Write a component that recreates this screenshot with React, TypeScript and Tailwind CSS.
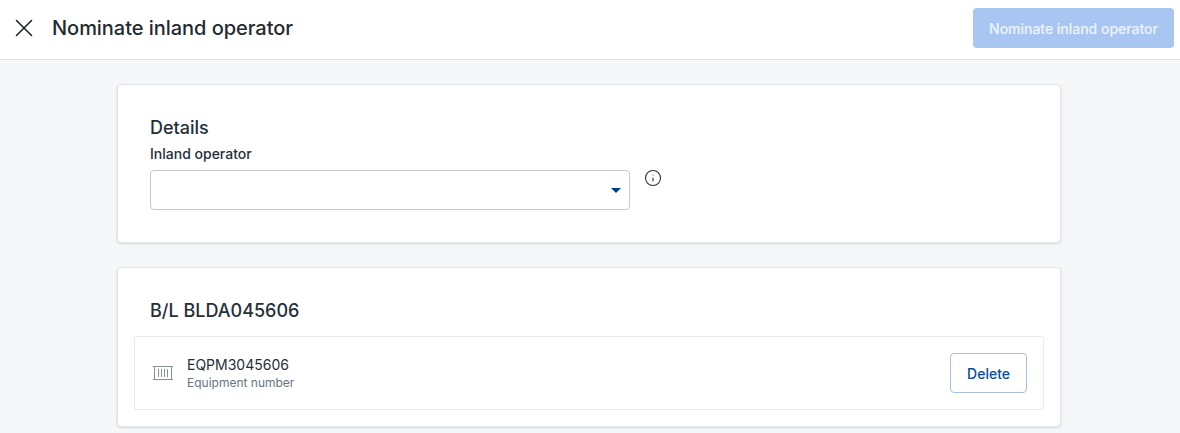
import { X, Info } from 'lucide-react'

const font = { fontFamily: 'Inter, sans-serif' }

const ContainerIcon = () => (
  <svg width="20" height="16" viewBox="0 0 20 16" fill="none" stroke="#87919b" strokeWidth="1">
    <path d="M0 1.5h20M0 14.5h20M1.5 1.5v13M18.5 1.5v13" />
    <path d="M5.5 4v8M8.5 4v8M11.5 4v8M14.5 4v8" />
  </svg>
)

export default function App() {
  return (
    <div style={font} className="h-[433px] w-[1180px] overflow-hidden bg-[#f5f7f9] text-[#252f3a]">
      <header className="flex h-[60px] items-center justify-between border-b border-[#dde1e5] bg-white pb-[3px] pl-[9px] pr-[6px]">
        <div className="flex items-center gap-[13px]">
          <X size={30} strokeWidth={1.3} className="text-[#1f2a33]" />
          <h1 className="text-[20px] font-medium tracking-[-0.04px] text-[#1f2a33]">Nominate inland operator</h1>
        </div>
        <button className="h-[40px] w-[201px] rounded-[4px] bg-[#a9c6f2] text-[14px] font-medium tracking-[-0.02px] text-white/80">
          Nominate inland operator
        </button>
      </header>
      <main className="ml-[117px] flex w-[944px] flex-col gap-[24px] pt-[24px]">
        <section className="rounded-[4px] border border-[#e1e4e8] bg-white px-[32px] pb-[32px] pt-[32px] shadow-sm">
          <h2 className="text-[18px] font-medium leading-[22px]">Details</h2>
          <label className="mt-[5px] block text-[14px] font-medium leading-[20px]">Inland operator</label>
          <div className="mt-[6px] flex items-start gap-[14px]">
            <div className="flex h-[40px] w-[480px] items-center justify-end rounded-[4px] border border-[#c4c8cc] bg-white pr-[8px]">
              <span className="h-0 w-0 border-x-[5px] border-t-[5px] border-x-transparent border-t-[#003c8c]" />
            </div>
            <Info size={18} strokeWidth={1.4} className="-mt-[1px]" />
          </div>
        </section>
        <section className="rounded-[4px] border border-[#e1e4e8] bg-white px-[16px] pb-[16px] pt-[32px] shadow-sm">
          <h2 className="pl-[16px] text-[18px] font-medium leading-[22px]">B/L BLDA045606</h2>
          <div className="mt-[14px] flex h-[74px] items-center justify-between rounded-[2px] border border-[#e9ebee] pl-[18px] pr-[16px]">
            <div className="flex items-center gap-[14px]">
              <ContainerIcon />
              <div>
                <p className="text-[14px] leading-[20px]">EQPM3045606</p>
                <p className="text-[12px] leading-[16px] text-[#68737e]">Equipment number</p>
              </div>
            </div>
            <button className="h-[40px] rounded-[4px] border border-[#a9c0dc] bg-white px-[16px] text-[14px] font-medium text-[#0a4a9f]">
              Delete
            </button>
          </div>
        </section>
      </main>
    </div>
  )
}
